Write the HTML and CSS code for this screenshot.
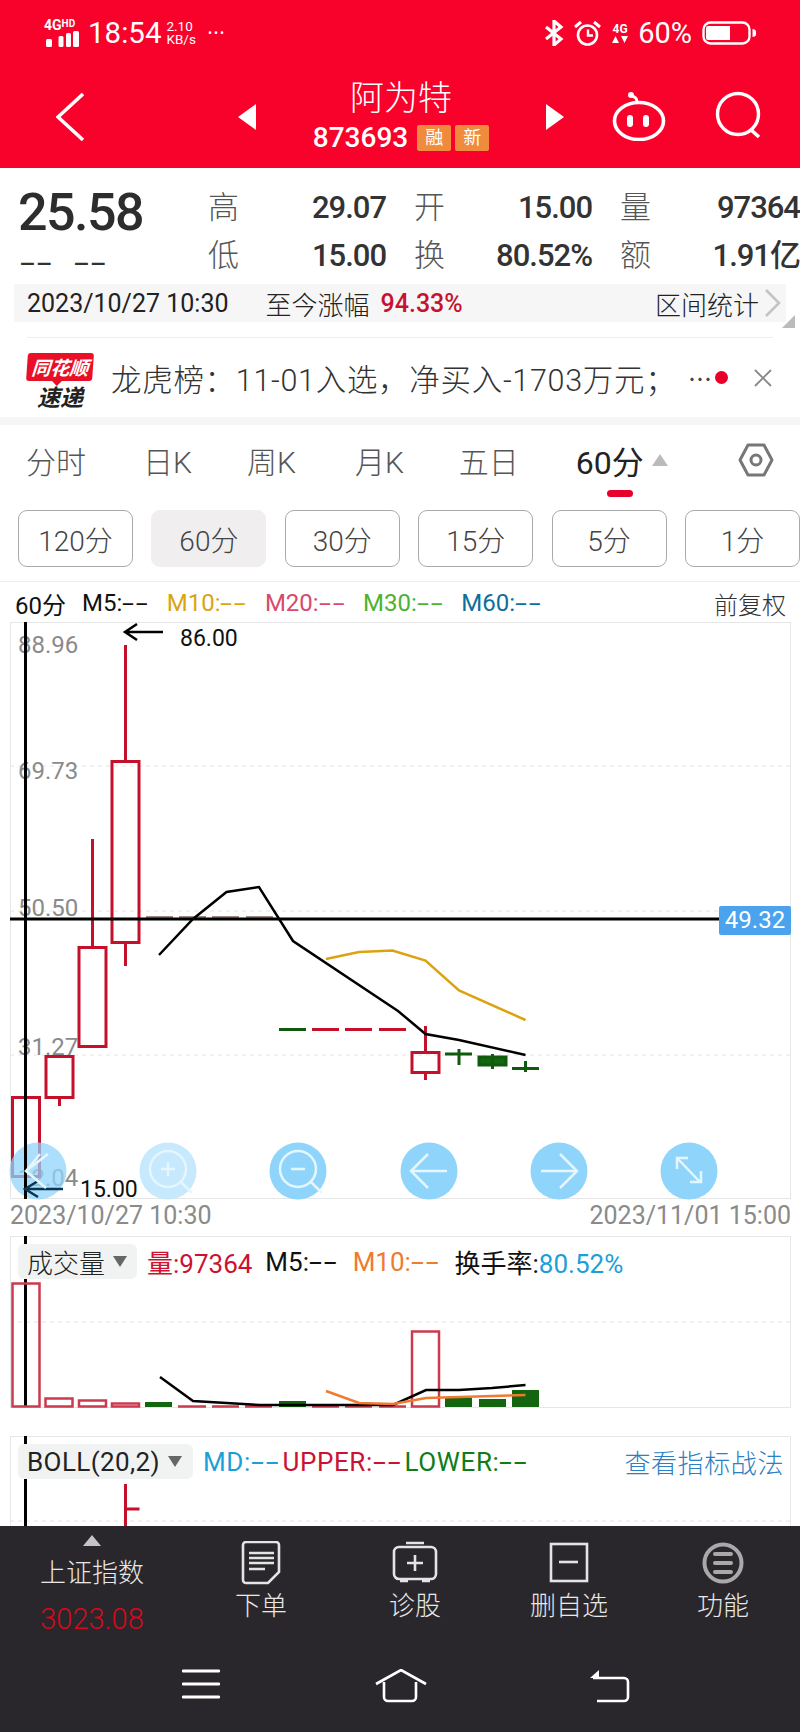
FILE: index.html
```html
<!DOCTYPE html>
<html lang="zh">
<head>
<meta charset="utf-8">
<title>阿为特</title>
<link rel="stylesheet" href="styles.css">
</head>
<body>
<div class="page">
  <header class="top">
    <div class="status">
      <div class="signal">
        <span class="net">4G<sup>HD</sup></span>
        <svg width="36" height="16" viewBox="0 0 36 16"><g fill="#fff"><rect x="2" y="8" width="6" height="8" rx="1.500"/><rect x="14.500" y="5" width="5" height="11" rx="1.500"/><rect x="22" y="2" width="5" height="14" rx="1.500"/><rect x="29" y="0" width="6" height="16" rx="1.500"/></g></svg>
      </div>
      <span class="time">18:54</span>
      <span class="speed"><span>2.10</span><span>KB/s</span></span>
      <span class="dots">•••</span>
      <span class="spacer"></span>
      <svg class="st-bt" width="20" height="26" viewBox="0 0 20 26"><path d="M2 7l15 12-7 6V1l7 6L2 19" fill="none" stroke="#fff" stroke-width="3.200"/></svg>
      <svg class="st-alarm" width="27" height="27" viewBox="0 0 27 27"><circle cx="13.500" cy="15" r="9.500" fill="none" stroke="#fff" stroke-width="2.600"/><path d="M14 9.500v6h5" fill="none" stroke="#fff" stroke-width="2.400"/><path d="M1 7l6-5M26 7l-6-5" stroke="#fff" stroke-width="3"/></svg>
      <span class="st-net"><b>4G</b><svg width="16" height="9" viewBox="0 0 16 9"><path d="M0 8l3.500-7L7 8zM9 1h7l-3.500 7z" fill="#fff"/></svg></span>
      <span class="pct">60%</span>
      <svg class="st-bat" width="54" height="24" viewBox="0 0 54 24"><rect x="1.500" y="1.500" width="46" height="21" rx="7" fill="none" stroke="#fff" stroke-width="2.400"/><path d="M6 5h22v14H6a2 2 0 0 1-2-2V7a2 2 0 0 1 2-2z" fill="#fff"/><path d="M50.500 8a4 4 0 0 1 0 8z" fill="#fff"/></svg>
    </div>
    <nav class="nav">
      <svg width="28" height="50" viewBox="0 0 28 50"><path d="M27 2L2 25l25 23" fill="none" stroke="#fff" stroke-width="3.600"/></svg>
      <svg width="20" height="28" viewBox="0 0 20 28"><path d="M19 1v26L1 14z" fill="#fff"/></svg>
      <div class="stock">
        <div class="name">阿为特</div>
        <div class="code"><span>873693</span><i class="tag">融</i><i class="tag">新</i></div>
      </div>
      <svg width="20" height="28" viewBox="0 0 20 28"><path d="M1 1v26l18-13z" fill="#fff"/></svg>
      <svg class="robot" width="54" height="50" viewBox="0 0 54 50"><ellipse cx="27" cy="30" rx="24.500" ry="18.500" fill="none" stroke="#fff" stroke-width="3.600"/><path d="M25 11c0-4-2-5-5-6" fill="none" stroke="#fff" stroke-width="3"/><circle cx="19" cy="4" r="3" fill="#fff"/><rect x="15" y="24" width="6" height="12" rx="3" fill="#fff"/><rect x="31" y="24" width="6" height="12" rx="3" fill="#fff"/></svg>
      <svg class="search" width="48" height="48" viewBox="0 0 48 48"><circle cx="23" cy="23" r="20.500" fill="none" stroke="#fff" stroke-width="3.400"/><path d="M35 38l9 8" stroke="#fff" stroke-width="3.600"/></svg>
    </nav>
  </header>

  <section class="quote">
    <div class="price">
      <div class="last">25.58</div>
      <div class="change"><span class="d">--</span><span class="d">--</span></div>
    </div>
    <div class="stats">
      <div class="stat"><span>高</span><b>29.07</b></div>
      <div class="stat"><span>开</span><b>15.00</b></div>
      <div class="stat"><span>量</span><b>97364</b></div>
      <div class="stat"><span>低</span><b>15.00</b></div>
      <div class="stat"><span>换</span><b>80.52%</b></div>
      <div class="stat"><span>额</span><b>1.91亿</b></div>
    </div>
  </section>

  <div class="strip">
    <span class="strip-date">2023/10/27 10:30</span>
    <span class="strip-label">至今涨幅</span>
    <span class="strip-val">94.33%</span>
    <span class="spacer"></span>
    <span class="strip-label">区间统计</span>
    <svg width="18" height="30" viewBox="0 0 18 30"><path d="M2 2l13 13L2 28" fill="none" stroke="#c4c4c4" stroke-width="2.600"/></svg>
    <i class="corner"></i>
  </div>

  <div class="news-wrap">
    <div class="news">
      <div class="logo">
        <div class="logo-top">同花顺</div>
        <div class="logo-bot">速递</div>
      </div>
      <div class="news-text">龙虎榜：11-01入选，净买入-1703万元；</div>
      <span class="spacer"></span>
      <span class="ell">⋯</span>
      <i class="dot"></i>
      <svg width="20" height="20" viewBox="0 0 20 20"><path d="M2 2l16 16M18 2L2 18" stroke="#888" stroke-width="1.800"/></svg>
    </div>
  </div>

  <div class="tabs">
    <span class="tab t1">分时</span>
    <span class="tab t2">日K</span>
    <span class="tab t3">周K</span>
    <span class="tab t4">月K</span>
    <span class="tab t5">五日</span>
    <span class="tab active">60分<i class="tab-tri"></i><i class="tab-line"></i></span>
    <svg class="hex" width="36" height="34" viewBox="0 0 36 34"><path d="M10 2h16l8 15-8 15H10L2 17z" fill="none" stroke="#777" stroke-width="3" stroke-linejoin="round"/><circle cx="18" cy="17" r="5" fill="none" stroke="#777" stroke-width="3"/></svg>
  </div>

  <div class="periods">
    <span class="period">120分</span>
    <span class="period on">60分</span>
    <span class="period">30分</span>
    <span class="period">15分</span>
    <span class="period">5分</span>
    <span class="period">1分</span>
  </div>

  <div class="legend">
    <span class="l-p">60分</span>
    <span class="l-5">M5:<span class="d">--</span></span>
    <span class="l-10">M10:<span class="d">--</span></span>
    <span class="l-20">M20:<span class="d">--</span></span>
    <span class="l-30">M30:<span class="d">--</span></span>
    <span class="l-60">M60:<span class="d">--</span></span>
    <span class="spacer"></span>
    <span class="l-fq">前复权</span>
  </div>

  <svg class="chart" width="800" height="577" viewBox="0 623 800 577">
    <rect class="frame" x="10.500" y="623.500" width="780" height="576"/>
    <g class="grid">
      <path d="M10 767H790M10 912H790M10 1056H790"/>
    </g>
    <g class="axis">
      <text x="18" y="654">88.96</text>
      <text x="18" y="780">69.73</text>
      <text x="18" y="917">50.50</text>
      <text x="18" y="1056">31.27</text>
      <text x="18" y="1187">12.04</text>
    </g>
    <g class="up">
      <path d="M12.500 1098.500h27v79h-27z"/>
      <path d="M46 1057.500h27v41h-27zM59.500 1098v9"/>
      <path d="M79 948.500h27v99h-27zM92.500 840v108"/>
      <path d="M112 762.500h27v181h-27zM125.500 646v116M125.500 944v23"/>
      <path d="M312 1030.500h27M345 1030.500h27M379 1030.500h27"/>
      <path d="M412 1053.500h27v20h-27zM425.500 1027v26M425.500 1074v7"/>
    </g>
    <path class="flat" d="M146 918h27M179 918h27M212 918h27M246 918h27"/>
    <g class="down">
      <path d="M279 1030.500h27"/>
      <path d="M445 1055h27M459 1050v16"/>
      <path d="M479 1058h27v8h-27zM492.500 1055v15"/>
      <path d="M512 1069.500h27M525.500 1062v11"/>
    </g>
    <polyline class="m5" points="159,956 193,920 226.500,893 259,888 293,942 398,1012 425.500,1035 459,1041 525.500,1056"/>
    <polyline class="m10" points="326,960 359,953 392.500,951.500 425.500,961.500 459,991.500 525.500,1021"/>
    <path class="cross" d="M10 920H720"/>
    <rect class="cur-bg" x="719" y="907" width="72" height="29" rx="2"/>
    <text class="cur" x="755" y="929">49.32</text>
    <path class="arrow" d="M125 633h38M137 625l-12 8 12 8"/>
    <text class="note" x="180" y="647">86.00</text>
    <circle class="btn op" cx="38" cy="1172" r="28.500"/>
    <path class="cross" d="M25.500 623V1200"/>
    <path class="arrow near" d="M25 1190h38M38 1182l-13 8 13 8"/>
    <path class="ico" d="M48 1156l-22 17 20 17M40 1156l-14 17 20 17" transform="translate(0 -1)"/>
    <circle class="btn lt" cx="168" cy="1172" r="28.500"/>
    <g class="ico"><circle cx="168" cy="1170" r="18"/><path d="M181 1183l11 11M161 1170h14M168 1163v14"/></g>
    <circle class="btn" cx="298" cy="1172" r="28.500"/>
    <g class="ico"><circle cx="298" cy="1170" r="18"/><path d="M311 1183l11 11M291 1170h14"/></g>
    <circle class="btn" cx="429" cy="1172" r="28.500"/>
    <path class="ico" d="M447 1172h-36M428 1155l-17 17 17 17"/>
    <circle class="btn" cx="559" cy="1172" r="28.500"/>
    <path class="ico" d="M541 1172h36M560 1155l17 17-17 17"/>
    <circle class="btn" cx="689" cy="1172" r="28.500"/>
    <path class="ico" d="M678 1160l22 23M677 1170v-11h11M701 1172v11h-11"/>
    <text class="note" x="80" y="1198">15.00</text>
  </svg>

  <div class="dates"><span>2023/10/27 10:30</span><span>2023/11/01 15:00</span></div>

  <div class="panel vol">
    <svg class="chart" width="800" height="172" viewBox="0 1237 800 172">
      <rect class="frame" x="10.500" y="1237.500" width="780" height="171"/>
      <path class="grid-d" d="M10 1323H790"/>
      <path class="cross" d="M25.500 1237V1408"/>
      <g class="vb">
        <path d="M12.500 1284.500h27v123h-27zM45.500 1399.500h27v8h-27zM79 1401.500h27v6h-27zM112 1404.500h27v3h-27zM412 1332.500h27v75h-27z"/>
        <path d="M178 1407.500h28M212 1407.500h27M245 1407.500h27M312 1407.500h27M345 1407.500h27M379 1407.500h27"/>
      </g>
      <g class="vd">
        <rect x="145" y="1403" width="27" height="5"/>
        <rect x="279" y="1402" width="27" height="6"/>
        <rect x="445" y="1399" width="27" height="9"/>
        <rect x="479" y="1400" width="27" height="8"/>
        <rect x="512" y="1391" width="27" height="17"/>
      </g>
      <polyline class="m5" points="160,1378 193,1402 260,1406 393,1406 426,1391 459,1391 492,1389 525.500,1386"/>
      <polyline class="m10v" points="326,1392 359,1404 393,1405 426,1399 525.500,1396"/>
    </svg>
    <div class="phead">
      <span class="sel s1">成交量<i></i></span>
      <span class="c-red">量:97364</span>
      <span class="c-blk">M5:<span class="d">--</span></span>
      <span class="c-org">M10:<span class="d">--</span></span>
      <span class="c-blk">换手率:<em>80.52%</em></span>
    </div>
  </div>

  <div class="panel boll">
    <svg class="chart" width="800" height="90" viewBox="0 1437 800 90">
      <path class="frame" d="M10.500 1527V1437.500H790.500V1527"/>
      <path class="grid-d" d="M10 1522H790"/>
      <path class="cross" d="M25.500 1437V1527"/>
      <path class="up" d="M125.500 1485v42M125.500 1510h14"/>
    </svg>
    <div class="phead bh">
      <span class="sel s2">BOLL(20,2)<i></i></span>
      <span class="c-md">MD:<span class="d">--</span></span><span class="c-red">UPPER:<span class="d">--</span></span><span class="c-grn">LOWER:<span class="d">--</span></span>
      <span class="spacer"></span>
      <span class="c-link">查看指标战法</span>
    </div>
  </div>

  <footer class="bottom">
    <div class="actions">
      <div class="act index"><i class="idx-tri"></i><span>上证指数</span><span class="idx-val">3023.08</span></div>
      <div class="act">
        <svg width="40" height="44" viewBox="0 0 40 44"><path d="M5 1h30a3 3 0 0 1 3 3v27L27 42H5a3 3 0 0 1-3-3V4a3 3 0 0 1 3-3z" class="ic-s"/><path d="M8 12h25M8 17h25M8 22h25M8 28h16" class="ic-s"/></svg>
        <span>下单</span>
      </div>
      <div class="act">
        <svg width="46" height="44" viewBox="0 0 46 44"><rect x="2" y="6" width="42" height="32" rx="5" class="ic-s"/><path d="M14 2h18M23 14v16M15 22h16M8 40h8M30 40h8" class="ic-s"/></svg>
        <span>诊股</span>
      </div>
      <div class="act">
        <svg width="40" height="44" viewBox="0 0 40 44"><rect x="2" y="3" width="36" height="37" class="ic-s"/><path d="M10 21h19" class="ic-s"/></svg>
        <span>删自选</span>
      </div>
      <div class="act">
        <svg width="44" height="44" viewBox="0 0 44 44"><circle cx="22" cy="22" r="18.500" class="ic-g"/><path d="M14 13h16M14 22h16M14 31h16" class="ic-g"/></svg>
        <span>功能</span>
      </div>
    </div>
    <div class="sysnav">
      <svg width="38" height="30" viewBox="0 0 38 30"><path d="M1 2h36M1 15h36M1 28h36" stroke="#fff" stroke-width="2.800" stroke-linecap="round"/></svg>
      <svg class="sn2" width="52" height="34" viewBox="0 0 52 34"><path d="M1 15L26 1l25 14" fill="none" stroke="#fff" stroke-width="2.600"/><path d="M10 13v15a4 4 0 0 0 4 4h24a4 4 0 0 0 4-4V13" fill="none" stroke="#fff" stroke-width="2.600" transform="translate(-1 0)"/></svg>
      <svg class="sn3" width="42" height="34" viewBox="0 0 42 34"><path d="M4 9h31a4 4 0 0 1 4 4v15a4 4 0 0 1-4 4H8" fill="none" stroke="#fff" stroke-width="2.600"/><path d="M1 9l9-8v8z" fill="#fff"/></svg>
    </div>
  </footer>
</div>
</body>
</html>
```
FILE: styles.css
```css
* { box-sizing: border-box; }
html, body { margin: 0; padding: 0; background: #fff; }
body { font-family: Roboto, "Noto Sans CJK SC", sans-serif; color: #333; }
i, em { font-style: normal; }
svg { display: block; flex: none; }
.page { width: 800px; height: 1733px; overflow: hidden; }
.spacer { flex: 1; }
.d { display: inline-block; letter-spacing: 1px; transform: scaleX(1.8); transform-origin: 0 50%; margin-right: 0.55em; }

.top { height: 168px; background: #f8012b; color: #fff; }
.status { display: flex; align-items: center; height: 66px; padding-left: 44px; }
.signal { display: flex; flex-direction: column; width: 36px; }
.net { font: 700 14px/12px Roboto, sans-serif; white-space: nowrap; }
.net sup { font-size: 10px; line-height: 0; vertical-align: 3px; }
.time { font-size: 29.500px; font-weight: 400; margin-left: 8px; }
.speed { display: flex; flex-direction: column; font-size: 13.500px; line-height: 13px; margin-left: 5px; }
.dots { font-size: 12px; letter-spacing: 2px; margin-left: 12px; }
.st-bt { margin-right: 10px; }
.st-alarm { margin-right: 10px; }
.st-net { display: flex; flex-direction: column; align-items: center; width: 18px; margin-right: 9px; }
.st-net b { font: 700 12px/12px Roboto, sans-serif; }
.pct { font-size: 29px; margin-right: 10px; }
.st-bat { margin-right: 44px; }

.nav { display: grid; grid-template-columns: 181px 20px 288px 67px 103px 48px; grid-template-rows: 102px; align-items: center; padding-left: 56px; }
.stock { text-align: center; }
.name { font-size: 34px; line-height: 44px; font-weight: 300; margin-top: -6px; }
.code { display: flex; justify-content: center; align-items: center; gap: 4px; font-size: 28px; line-height: 28px; font-weight: 500; margin-top: 4px; }
.code span { margin-right: 5px; }
.tag { width: 34px; height: 26px; border-radius: 2px; background: #f08a3c; font-size: 18px; font-weight: 400; line-height: 26px; text-align: center; }
.robot { margin-top: -2px; }
.search { margin-top: -4px; }

.quote { display: flex; height: 116px; padding: 20px 0 0 18px; }
.price { width: 190px; }
.last { font-size: 52px; line-height: 50px; font-weight: 500; color: #2d2d2d; letter-spacing: -1.500px; }
.change { display: flex; gap: 19px; font-size: 30px; line-height: 30px; margin: 10px 0 0 2px; }
.stats { display: grid; grid-template-columns: 178px 178px 180px; column-gap: 28px; grid-auto-rows: 48px; margin-top: -4px; }
.stat { display: flex; justify-content: space-between; align-items: center; font-size: 31px; line-height: 36px; white-space: nowrap; }
.stat span { font-weight: 300; color: #555; }
.stat b { font-weight: 500; color: #333; letter-spacing: -1px; }

.strip { position: relative; display: flex; align-items: center; height: 38px; margin: 0 14px; padding: 0 4px 0 13px; background: #f6f6f6; white-space: nowrap; }
.strip-date { font-size: 25px; font-weight: 400; color: #222; margin-right: 37px; }
.strip-label { font-size: 26px; font-weight: 300; color: #222; margin-right: 11px; }
.strip-val { font-size: 25px; font-weight: 500; color: #c7122f; }
.strip svg { margin-left: -6px; }
.corner { position: absolute; right: -9px; bottom: -6px; width: 0; height: 0; border-style: solid; border-width: 0 0 13px 13px; border-color: transparent transparent #bbb transparent; }

.news-wrap { padding: 15px 27px 0; height: 95px; }
.news { display: flex; align-items: center; height: 80px; border-top: 1px solid #eee; }
.logo { position: relative; width: 66px; margin-top: 8px; }
.logo-top { position: relative; width: 66px; height: 28px; background: #e80f26; color: #fff; border-radius: 3px; font: italic 700 19px/28px "Noto Sans CJK SC", sans-serif; text-align: center; transform: skewX(-4deg); }
.logo-top::after { content: ""; position: absolute; left: 26px; bottom: -5px; border-style: solid; border-width: 5px 5px 0; border-color: #e80f26 transparent transparent; }
.logo-bot { font: italic 700 23px/27px "Noto Sans CJK SC", sans-serif; color: #222; text-align: center; padding-top: 2px; }
.news-text { font-size: 30.500px; font-weight: 300; color: #333; margin-left: 18px; white-space: nowrap; letter-spacing: 0.700px; }
.ell { font-size: 24px; color: #444; }
.dot { width: 13px; height: 13px; margin-left: 3px; border-radius: 50%; background: #e8002a; }
.news svg { margin-left: 25px; }

.tabs { display: flex; align-items: center; height: 93px; border-top: 8px solid #f6f6f6; padding-bottom: 15px; }
.tab { position: relative; font-size: 30px; font-weight: 300; color: #555; white-space: nowrap; }
.t1 { margin-left: 26px; }
.t2 { margin-left: 57px; }
.t3 { margin-left: 55px; }
.t4 { margin-left: 59px; }
.t5 { margin-left: 55px; }
.active { margin-left: 57px; font-size: 32px; color: #222; font-weight: 400; }
.tab-tri { position: absolute; left: 76px; top: 17px; border-style: solid; border-width: 0 8px 12px; border-color: transparent transparent #bbb; }
.tab-line { position: absolute; left: 31px; top: 53px; width: 26px; height: 7px; border-radius: 3.500px; background: #e8002d; }
.hex { margin-left: 94px; }

.periods { display: flex; gap: 18.400px; padding-left: 18px; height: 72px; border-bottom: 1px solid #eee; }
.period { display: flex; align-items: center; justify-content: center; flex: none; width: 115px; height: 57px; border: 1px solid #aaa; border-radius: 9px; font-size: 28px; font-weight: 300; color: #444; }
.period.on { background: #f0eeee; border-color: #f0eeee; }

.legend { display: flex; align-items: center; gap: 16px; height: 40px; padding: 2px 14px 0 15px; font-size: 24px; white-space: nowrap; }
.l-p { color: #111; font-size: 24px; }
.l-5 { color: #111; }
.l-10 { color: #dca311; }
.l-20 { color: #d84a6c; }
.l-30 { color: #4bb32e; }
.l-60 { color: #0d6f9a; }
.l-fq { font-weight: 300; color: #333; }

.chart { fill: none; overflow: visible; }
.frame { fill: none; stroke: #e6e6e6; stroke-width: 1; }
.grid path, .grid-d { fill: none; stroke: #e4e4e4; stroke-width: 1; stroke-dasharray: 4 4; }
.axis text { fill: #8a8a8a; font: 400 24px Roboto, sans-serif; }
.up path, path.up { fill: none; stroke: #c5102c; stroke-width: 3; }
.flat { stroke: #a08a85; stroke-width: 2; }
.down path { fill: #13650f; stroke: #0f5a0c; stroke-width: 3; }
.m5 { fill: none; stroke: #000; stroke-width: 2.500; }
.m10 { fill: none; stroke: #dca311; stroke-width: 2.500; }
.m10v { fill: none; stroke: #ef7a30; stroke-width: 2.500; }
.cross { fill: none; stroke: #000; stroke-width: 3; }
.cur-bg { fill: #4ba3ee; }
.cur { fill: #fff; font: 400 24px Roboto, sans-serif; text-anchor: middle; }
.arrow { fill: none; stroke: #000; stroke-width: 2.500; }
.arrow.near { stroke: #0b3550; }
.note { fill: #111; font: 400 23px Roboto, sans-serif; }
.btn { fill: #8fd4fb; }
.btn.op { fill-opacity: 0.75; }
.btn.lt { fill: #c6e9fd; }
.ico, .ico circle, .ico path { fill: none; stroke: #e6f6ff; stroke-width: 2.500; }

.dates { display: flex; justify-content: space-between; height: 37px; padding: 2px 9px 0 10px; font-size: 25px; line-height: 30px; color: #8a8a8a; font-weight: 400; }

.panel { position: relative; }
.vb path { fill: none; stroke: #cb3a4d; stroke-width: 2.500; }
.vd rect { fill: #13650f; }
.phead { position: absolute; left: 18px; top: 8px; right: 18px; display: flex; align-items: center; height: 35px; font-size: 26px; font-weight: 400; white-space: nowrap; }
.phead.bh { right: 15px; }
.sel { display: flex; align-items: center; flex: none; height: 35px; padding-left: 9px; margin-right: 10px; background: #f1f3f3; border-radius: 6px; color: #222; font-weight: 300; }
.s1 { width: 119px; }
.s2 { width: 175px; font-weight: 400; letter-spacing: 0.400px; }
.sel i { margin-left: 8px; border-style: solid; border-width: 11px 7px 0; border-color: #666 transparent transparent; }
.phead > span:not(.sel):not(.spacer) { margin-right: 13px; }
.phead.bh > span:not(.sel):not(.spacer) { margin-right: 1px; letter-spacing: 0.600px; }
.phead.bh > .c-link { margin-right: 0; letter-spacing: 0; }
.c-red { color: #cb1230; }
.c-blk { color: #111; }
.c-org { color: #ef7a30; }
.c-md { color: #1a9fd8; }
.c-grn { color: #0f7d17; }
.c-link { color: #2b7fc3; font-size: 26px; font-weight: 300; }
.c-blk em { color: #1a9fd8; }
.vol { height: 200px; }
.boll { height: 90px; }

.bottom { height: 206px; background: #29272b; color: #e8e8e8; }
.actions { display: grid; grid-template-columns: 184px repeat(4, 154px); height: 128px; }
.act { display: flex; flex-direction: column; align-items: center; padding-top: 15px; font-size: 26px; font-weight: 300; }
.act span { line-height: 40px; margin-top: 1px; }
.act.index { padding-top: 9px; }
.idx-tri { border-style: solid; border-width: 0 9.500px 11px; border-color: transparent transparent #c4c4c4; }
.index span { margin-top: 8px; line-height: 38px; }
.index .idx-val { margin-top: 7px; color: #d40a1c; font-size: 29px; line-height: 40px; }
.ic-s { fill: none; stroke: #e4e4e4; stroke-width: 2.600; }
.ic-g { fill: none; stroke: #a9a9a9; stroke-width: 4; stroke-linecap: round; }
.sysnav { display: flex; align-items: flex-start; padding: 15px 0 0 182px; }
.sn2 { margin-left: 155px; }
.sn3 { margin-left: 162px; }
```
